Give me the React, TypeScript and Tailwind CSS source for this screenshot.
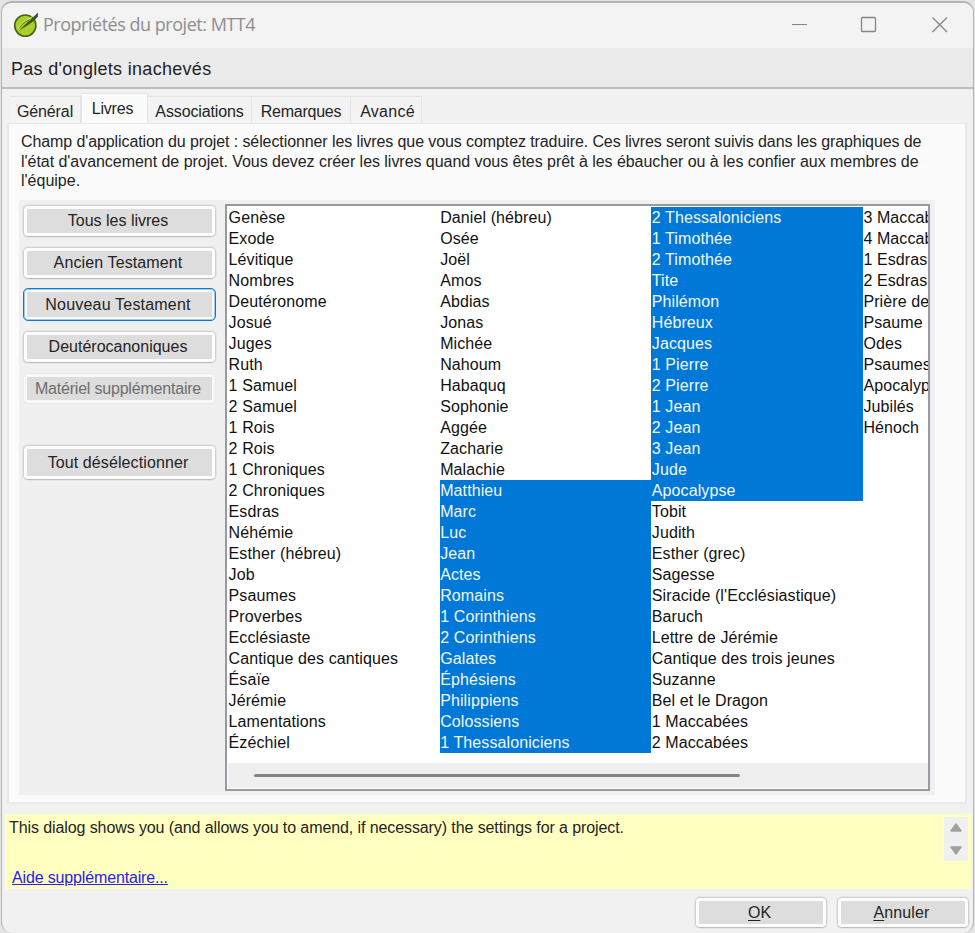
import React from 'react';
import clsx from 'clsx';

const BOOKS: string[][] = [
  ['Genèse', 'Exode', 'Lévitique', 'Nombres', 'Deutéronome', 'Josué', 'Juges', 'Ruth', '1 Samuel', '2 Samuel', '1 Rois', '2 Rois', '1 Chroniques', '2 Chroniques', 'Esdras', 'Néhémie', 'Esther (hébreu)', 'Job', 'Psaumes', 'Proverbes', 'Ecclésiaste', 'Cantique des cantiques', 'Ésaïe', 'Jérémie', 'Lamentations', 'Ézéchiel'],
  ['Daniel (hébreu)', 'Osée', 'Joël', 'Amos', 'Abdias', 'Jonas', 'Michée', 'Nahoum', 'Habaquq', 'Sophonie', 'Aggée', 'Zacharie', 'Malachie', 'Matthieu', 'Marc', 'Luc', 'Jean', 'Actes', 'Romains', '1 Corinthiens', '2 Corinthiens', 'Galates', 'Éphésiens', 'Philippiens', 'Colossiens', '1 Thessaloniciens'],
  ['2 Thessaloniciens', '1 Timothée', '2 Timothée', 'Tite', 'Philémon', 'Hébreux', 'Jacques', '1 Pierre', '2 Pierre', '1 Jean', '2 Jean', '3 Jean', 'Jude', 'Apocalypse', 'Tobit', 'Judith', 'Esther (grec)', 'Sagesse', "Siracide (l'Ecclésiastique)", 'Baruch', 'Lettre de Jérémie', 'Cantique des trois jeunes', 'Suzanne', 'Bel et le Dragon', '1 Maccabées', '2 Maccabées'],
  ['3 Maccabées', '4 Maccabées', '1 Esdras', '2 Esdras', 'Prière de Manassé', 'Psaume 151', 'Odes', 'Psaumes de Salomon', 'Apocalypse de Baruch', 'Jubilés', 'Hénoch'],
];
const ROWS = 26;
const FIRST_SELECTED = ROWS + 13;
const LAST_SELECTED = ROWS * 2 + 13;

function Button({ children, className, focused, disabled }: { children: React.ReactNode; className?: string; focused?: boolean; disabled?: boolean }) {
  return (
    <button
      className={clsx(
        'block shrink-0 rounded-[5px] border p-[3px] text-[16px] leading-[20px]',
        focused ? 'border-[#0f78d0] bg-[#fdfdfd] shadow-[inset_0_0_0_1px_#9ccbf0]' : disabled ? 'border-[#eaeaea] bg-[#f8f8f8]' : 'border-[#d0d0d0] border-b-[#bdbdbd] bg-[#fdfdfd] shadow-[0_0_0_1px_#e6e6e6]',
        disabled ? 'text-[#6e6e6e]' : 'text-[#242424]',
        className,
      )}
    >
      <span className="flex h-full items-center justify-center whitespace-nowrap bg-[#dddddd] pr-[3px]">{children}</span>
    </button>
  );
}

function Tab({ label, className, tracking }: { label: string; className: string; tracking: string }) {
  return (
    <div className={clsx('flex h-[27px] items-center justify-center whitespace-nowrap border border-b-0 border-l-0 border-[#e4e4e4] bg-[#f3f3f3] pt-[3px]', className)}>
      <span className={tracking}>{label}</span>
    </div>
  );
}

function Logo() {
  return (
    <svg className="mt-[9px] ml-[11px] h-[26px] w-[26px] shrink-0" viewBox="0 0 26 26">
      <circle cx="12.300" cy="13.600" r="10.600" fill="#a8cf2a" stroke="#46631c" strokeWidth="1.600" />
      <path d="M5 17C7 10.500 13 8 19 5" fill="none" stroke="#c2df5e" strokeWidth="1.200" />
      <path d="M5.500 19.500C8.500 16 12 12.500 16 9L25 0.500V4.500C23 7 20.500 9.500 17 11.500C14.500 14 10 15.500 5.500 19.500Z" fill="#3e5a1b" />
      <path d="M7 15.500C9 11.500 13 9.500 16.500 8" fill="none" stroke="#5d8120" strokeWidth="1" />
    </svg>
  );
}

export default function App() {
  return (
    <div className="h-[933px] w-[975px] overflow-hidden bg-[#e4e4e4] pt-px pr-px pl-px font-['Liberation_Sans',Arial,sans-serif] text-[16px] text-[#242424]">
      <div className="flex h-[932px] flex-col overflow-hidden rounded-[11px] border border-t-2 border-b-0 border-[#b4b4b4] bg-[#f1f1f1]">
        <header className="flex h-[45px] shrink-0 bg-[#f3f3f3]">
          <Logo />
          <h1 className="mt-[9px] ml-[4px] whitespace-nowrap font-['Open_Sans',sans-serif] text-[18px] leading-[24px] tracking-[-0.480px] text-[#8e8e8e]">Propriétés du projet: MTT4</h1>
          <svg className="mt-[12px] mr-[24px] ml-auto h-[18px] w-[158px] shrink-0" viewBox="0 0 158 18" fill="none" stroke="#858585" strokeWidth="1.300">
            <path d="M1 9.500H16" strokeWidth="1" />
            <rect x="70.500" y="2.500" width="14" height="14" rx="1" />
            <path d="M141.500 2.500L156 17M156 2.500L141.500 17" />
          </svg>
        </header>

        <div className="flex h-[41px] shrink-0 items-center border-b-2 border-[#bdbdbd] bg-[#ebebeb] pt-[3px] pl-[9px] text-[18px]">
          <span className="whitespace-nowrap tracking-[0.300px]">Pas d'onglets inachevés</span>
        </div>

        <nav className="flex h-[34px] shrink-0 items-end pl-[8px]">
          <Tab label="Général" className="w-[71px] border-l" tracking="tracking-[-0.100px]" />
          <div className="mb-[-1px] flex h-[31px] w-[67px] items-start justify-center border-x border-t border-[#e4e4e4] bg-[#fbfbfb] pt-[5px] pr-[4px] leading-[20px] tracking-[-0.200px]">Livres</div>
          <Tab label="Associations" className="w-[104px]" tracking="tracking-[-0.130px]" />
          <Tab label="Remarques" className="w-[99px]" tracking="tracking-[-0.250px]" />
          <Tab label="Avancé" className="w-[71px] pl-[3px]" tracking="tracking-[0.250px]" />
        </nav>

        <main className="mr-[6px] ml-[5px] h-[681px] shrink-0 border-2 border-t border-[#e9e9e9] bg-[#fbfbfb] pl-[10px]">
          <div className="ml-[2px] h-[76px] whitespace-nowrap pt-[8px] leading-[19.500px]">
            <p className="tracking-[-0.096px]">Champ d'application du projet : sélectionner les livres que vous comptez traduire. Ces livres seront suivis dans les graphiques de</p>
            <p className="tracking-[-0.040px]">l'état d'avancement de projet. Vous devez créer les livres quand vous êtes prêt à les ébaucher ou à les confier aux membres de</p>
            <p>l'équipe.</p>
          </div>
          <div className="flex h-[595px] w-[916px] bg-[#f0f0f0] pt-[4px] pl-[4px]">
            <div className="mt-[1px] mr-[9px] flex w-[193px] flex-col gap-[10px]">
              <Button className="h-[32px] w-[193px]">Tous les livres</Button>
              <Button className="h-[32px] w-[193px] tracking-[0.120px]">Ancien Testament</Button>
              <Button className="-mt-px h-[33px] w-[193px] tracking-[0.200px]" focused>Nouveau Testament</Button>
              <Button className="h-[32px] w-[193px]">Deutérocanoniques</Button>
              <Button className="h-[31px] w-[193px] tracking-[-0.200px]" disabled>Matériel supplémentaire</Button>
              <Button className="mt-[31px] h-[35px] w-[193px] tracking-[0.100px]">Tout désélectionner</Button>
            </div>
            <div className="h-[587px] w-[705px] overflow-hidden border-2 border-[#969ba2] bg-white pt-[1px] pl-[1px]">
              <div className="h-[556px] overflow-hidden">
                <div className="flex w-[850px] text-black">
                  {BOOKS.map((column, c) => (
                    <ul key={c} className="w-[211.600px] shrink-0">
                      {column.map((book, r) => {
                        const index = c * ROWS + r;
                        const selected = index >= FIRST_SELECTED && index <= LAST_SELECTED;
                        return (
                          <li key={book} className={clsx('h-[21px] whitespace-nowrap pl-[0.600px] leading-[21px] tracking-[0.100px]', selected ? 'bg-[#0078d7] text-[#f2f7fc]' : 'text-[#111111]')}>
                            {book}
                          </li>
                        );
                      })}
                    </ul>
                  ))}
                </div>
              </div>
              <div className="flex h-[25px] items-center bg-[#efefef] pl-[26px]">
                <div className="h-[3px] w-[486px] rounded-full bg-[#868686]" />
              </div>
            </div>
          </div>
        </main>

        <section className="mt-[10px] mr-[2px] ml-[3px] flex h-[75px] shrink-0 justify-between bg-[#ffffc1]">
          <div className="pt-[4px] pl-[4px]">
            <p className="whitespace-nowrap leading-[20px] tracking-[-0.095px]">This dialog shows you (and allows you to amend, if necessary) the settings for a project.</p>
            <a className="mt-[30px] ml-[3px] block w-max whitespace-nowrap leading-[20px] tracking-[-0.150px] text-[#2a20f0] underline">Aide supplémentaire...</a>
          </div>
          <div className="mt-[3px] mr-[3px] flex h-[44px] w-[25px] items-center justify-center border-l border-white bg-[#f0f0f0]">
            <svg className="h-[44px] w-[24px]" viewBox="0 0 24 44" fill="#a0a0a0" stroke="#a0a0a0" strokeLinejoin="round" strokeWidth="1.500">
              <path d="M12 7L17 14H7Z" />
              <path d="M12 37L7 30H17Z" />
            </svg>
          </div>
        </section>

        <footer className="mt-[8px] mr-[4px] flex justify-end gap-[10px]">
          <Button className="h-[31px] w-[132px]"><u className="underline-offset-2">O</u>K</Button>
          <Button className="h-[31px] w-[132px] tracking-[0.150px]"><u className="underline-offset-2">A</u>nnuler</Button>
        </footer>
      </div>
    </div>
  );
}
